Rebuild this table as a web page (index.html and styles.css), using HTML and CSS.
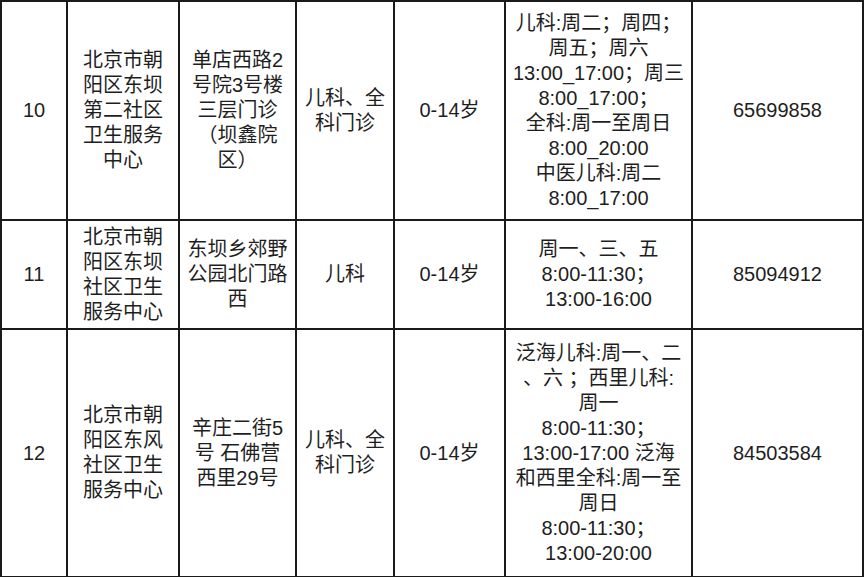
FILE: index.html
```html
<!DOCTYPE html>
<html lang="zh">
<head>
<meta charset="utf-8">
<link rel="stylesheet" href="styles.css">
</head>
<body>
<table class="sched">
  <colgroup>
    <col class="c1"><col class="c2"><col class="c3"><col class="c4"><col class="c5"><col class="c6"><col class="c7">
  </colgroup>
  <tr class="r10">
    <td>10</td>
    <td>北京市朝<br>阳区东坝<br>第二社区<br>卫生服务<br>中心</td>
    <td>单店西路2<br>号院3号楼<br>三层门诊<br>（坝鑫院<br>区）</td>
    <td>儿科、全<br>科门诊</td>
    <td>0-14岁</td>
    <td>儿科:周二；周四；<br>周五；周六<br>13:00_17:00；周三<br>8:00_17:00；<br>全科:周一至周日<br>8:00_20:00<br>中医儿科:周二<br>8:00_17:00</td>
    <td>65699858</td>
  </tr>
  <tr class="r11">
    <td>11</td>
    <td>北京市朝<br>阳区东坝<br>社区卫生<br>服务中心</td>
    <td>东坝乡郊野<br>公园北门路<br>西</td>
    <td>儿科</td>
    <td>0-14岁</td>
    <td>周一、三、五<br>8:00-11:30；<br>13:00-16:00</td>
    <td>85094912</td>
  </tr>
  <tr class="r12">
    <td>12</td>
    <td>北京市朝<br>阳区东风<br>社区卫生<br>服务中心</td>
    <td>辛庄二街5<br>号 石佛营<br>西里29号</td>
    <td>儿科、全<br>科门诊</td>
    <td>0-14岁</td>
    <td>泛海儿科:周一、二<br>、六 ；西里儿科:<br>周一<br>8:00-11:30；<br>13:00-17:00 泛海<br>和西里全科:周一至<br>周日<br>8:00-11:30；<br>13:00-20:00</td>
    <td>84503584</td>
  </tr>
</table>
</body>
</html>
```

FILE: styles.css
```css
html, body {
  margin: 0;
  padding: 0;
  background: #ffffff;
}

.sched {
  border-collapse: collapse;
  table-layout: fixed;
  width: 863px;
  margin: 0;
  font-family: "Liberation Sans", "Noto Sans CJK SC", sans-serif;
  font-size: 20px;
  line-height: 25px;
  color: #1e1e1e;
}

.sched td {
  border: 2px solid #1a1a1a;
  text-align: center;
  vertical-align: middle;
  padding: 0;
  white-space: nowrap;
  overflow: hidden;
}

.c1 { width: 66px; }
.c2 { width: 112px; }
.c3 { width: 117px; }
.c4 { width: 98px; }
.c5 { width: 111px; }
.c6 { width: 187px; }
.c7 { width: 171px; }

.r10 { height: 219px; }
.r11 { height: 109px; }
.r12 { height: 248px; }
```
